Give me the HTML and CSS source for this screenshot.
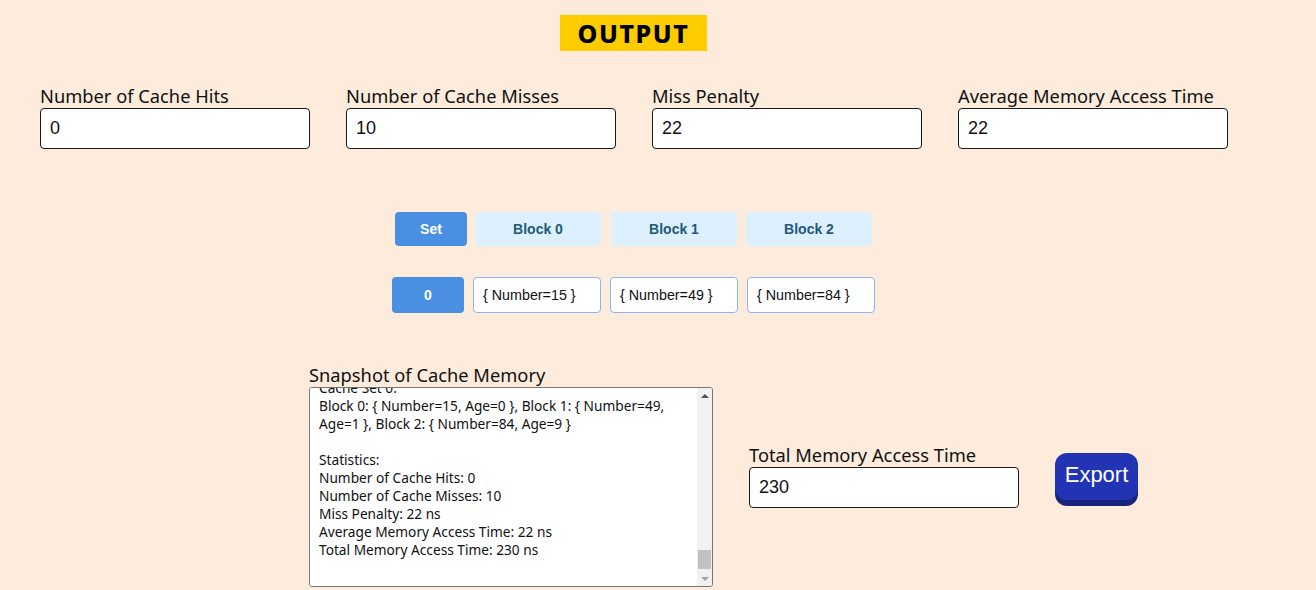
FILE: index.html
```html
<!DOCTYPE html>
<html lang="en">
<head>
<meta charset="utf-8">
<title>Cache Simulator Output</title>
<link rel="stylesheet" href="styles.css">
</head>
<body>
<div class="page">
  <div class="title-wrap"><h1 class="title">OUTPUT</h1></div>

  <div class="stats">
    <div class="field">
      <label class="field-label" for="hits">Number of Cache Hits</label>
      <input class="field-input" id="hits" type="text" value="0" readonly>
    </div>
    <div class="field">
      <label class="field-label" for="misses">Number of Cache Misses</label>
      <input class="field-input" id="misses" type="text" value="10" readonly>
    </div>
    <div class="field">
      <label class="field-label" for="penalty">Miss Penalty</label>
      <input class="field-input" id="penalty" type="text" value="22" readonly>
    </div>
    <div class="field">
      <label class="field-label" for="amat">Average Memory Access Time</label>
      <input class="field-input" id="amat" type="text" value="22" readonly>
    </div>
  </div>

  <div class="cache-table">
    <div class="cache-row head-row">
      <div class="set-cell head-set">Set</div>
      <div class="head-cell">Block 0</div>
      <div class="head-cell gap-wide">Block 1</div>
      <div class="head-cell">Block 2</div>
    </div>
    <div class="cache-row data-row">
      <div class="set-cell data-set">0</div>
      <div class="data-cell">{ Number=15 }</div>
      <div class="data-cell">{ Number=49 }</div>
      <div class="data-cell">{ Number=84 }</div>
    </div>
  </div>

  <div class="bottom">
    <div class="field snapshot">
      <label class="field-label" for="snapshot">Snapshot of Cache Memory</label>
      <div class="snapshot-frame">
        <textarea class="snapshot-box" id="snapshot" readonly>Cache Simulation Log
Cache Blocks: 3
Set Associativity: Fully Associative (1 set)
Replacement Policy: MRU

Memory Access Sequence:
84, 3, 27, 61, 5, 38, 72, 90, 49, 15

Access 1: Number=84 -> Miss
Access 2: Number=3 -> Miss
Access 3: Number=27 -> Miss
Access 4: Number=61 -> Miss
Access 5: Number=5 -> Miss
Access 6: Number=38 -> Miss
Access 7: Number=72 -> Miss
Access 8: Number=90 -> Miss
Access 9: Number=49 -> Miss
Access 10: Number=15 -> Miss

Final Cache State:
Cache Set 0:
Block 0: { Number=15, Age=0 }, Block 1: { Number=49, Age=1 }, Block 2: { Number=84, Age=9 }

Statistics:
Number of Cache Hits: 0
Number of Cache Misses: 10
Miss Penalty: 22 ns
Average Memory Access Time: 22 ns
Total Memory Access Time: 230 ns
</textarea>
        <div class="scrollbar" aria-hidden="true">
          <div class="sb-btn"><span class="sb-arrow-up"></span></div>
          <div class="sb-track"><div class="sb-thumb"></div></div>
          <div class="sb-btn"><span class="sb-arrow-down"></span></div>
        </div>
      </div>
    </div>
    <div class="field">
      <label class="field-label" for="total">Total Memory Access Time</label>
      <input class="field-input" id="total" type="text" value="230" readonly>
    </div>
    <button class="export-btn" type="button">Export</button>
  </div>
</div>
<script src="script.js"></script>
</body>
</html>
```

FILE: styles.css
```css
* { box-sizing: border-box; }

body {
  margin: 0;
  background: #fdecdc;
  font-family: "Noto Sans", "Open Sans", sans-serif;
  color: #111;
}

.page {
  width: 1267px;
  padding-top: 15px;
}

.title-wrap {
  display: flex;
  justify-content: center;
}

.title {
  margin: 0;
  width: 147px;
  height: 36px;
  background: #ffcc00;
  color: #000;
  font-family: "Noto Sans", sans-serif;
  font-weight: 800;
  font-size: 25px;
  letter-spacing: 1.6px;
  line-height: 36px;
  text-align: center;
}

.stats {
  display: flex;
  gap: 36px;
  padding-left: 40px;
  margin-top: 35px;
}

.field {
  display: flex;
  flex-direction: column;
}

.field-label {
  font-size: 18.3px;
  line-height: 20px;
  margin-bottom: 2px;
  color: #111;
}

.field-input {
  width: 270px;
  height: 41px;
  border: 1px solid #1a1a1a;
  border-radius: 4px;
  background: #fff;
  padding: 0 9px;
  font-family: "Liberation Sans", Arial, sans-serif;
  font-size: 18px;
  color: #111;
  outline: none;
}

.cache-table {
  margin-top: 63px;
  display: flex;
  flex-direction: column;
  align-items: center;
}

.cache-row {
  display: flex;
  font-family: "Liberation Sans", Arial, sans-serif;
  font-size: 14px;
}

.head-row {
  gap: 8px;
  height: 34px;
}

.head-row .gap-wide {
  margin-left: 2px;
  margin-right: 1px;
}

.data-row {
  gap: 9px;
  height: 36px;
  margin-top: 31px;
  font-size: 14.3px;
}

.set-cell {
  width: 72px;
  background: #4a90e2;
  color: #fff;
  font-weight: bold;
  font-size: 14px;
  border-radius: 4px;
  display: flex;
  align-items: center;
  justify-content: center;
}

.head-cell {
  width: 126px;
  background: #ddf0fd;
  color: #1f5a78;
  font-weight: bold;
  border-radius: 4px;
  display: flex;
  align-items: center;
  justify-content: center;
}

.data-cell {
  width: 128px;
  background: #fff;
  border: 1px solid #8cb6f2;
  border-radius: 4px;
  padding-left: 9px;
  display: flex;
  align-items: center;
  color: #111;
}

.bottom {
  display: flex;
  align-items: center;
  gap: 36px;
  margin-top: 52px;
  padding-left: 309px;
}

.snapshot-frame {
  width: 404px;
  height: 200px;
  border: 1px solid #767676;
  border-radius: 3px;
  background: #fff;
  display: flex;
  overflow: hidden;
}

.snapshot-box {
  flex: 1;
  min-width: 0;
  height: 100%;
  border: none;
  background: #fff;
  padding: 2px 9px 9px;
  font-family: "Noto Sans", sans-serif;
  font-size: 13.7px;
  line-height: 18px;
  color: #111;
  resize: none;
  overflow: hidden;
  outline: none;
}

.scrollbar {
  width: 15px;
  display: flex;
  flex-direction: column;
  background: #f1f1f1;
}

.sb-btn {
  height: 15px;
  display: flex;
  align-items: center;
  justify-content: center;
}

.sb-arrow-up {
  width: 0;
  height: 0;
  border-left: 4px solid transparent;
  border-right: 4px solid transparent;
  border-bottom: 4px solid #505050;
}

.sb-arrow-down {
  width: 0;
  height: 0;
  border-left: 4px solid transparent;
  border-right: 4px solid transparent;
  border-top: 4px solid #a3a3a3;
}

.sb-track {
  flex: 1;
  display: flex;
  flex-direction: column;
  justify-content: flex-end;
  padding: 0 1px 2px;
}

.sb-thumb {
  height: 19px;
  background: #c1c1c1;
}

.export-btn {
  width: 83px;
  height: 47px;
  border: none;
  border-radius: 12px;
  background: #2233b3;
  box-shadow: 0 6px 0 #18237e;
  color: #fff;
  font-family: "Liberation Sans", Arial, sans-serif;
  font-size: 22px;
  padding: 9px 0 13px;
  line-height: 25px;
  cursor: pointer;
}
```

FILE: script.js
```js
var box = document.getElementById('snapshot');
box.scrollTop = box.scrollHeight;
```
